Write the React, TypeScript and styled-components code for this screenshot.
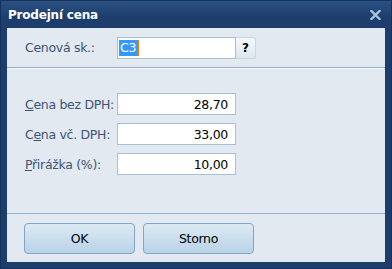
import React from "react";
import styled, { createGlobalStyle } from "styled-components";

const Global = createGlobalStyle`
  html, body { margin: 0; padding: 0; background: #1c3a66; }
  body { font-family: "DejaVu Sans", "Liberation Sans", sans-serif; }
`;

const Frame = styled.div`
  width: 392px;
  height: 269px;
  box-sizing: border-box;
  background: #1d3e6c;
  border: 1px solid #16325a;
  display: flex;
  flex-direction: column;
  padding: 0 6px 6px 6px;
`;

const TitleBar = styled.div`
  height: 27px;
  display: flex;
  align-items: center;
  justify-content: space-between;
  background: linear-gradient(#2a5283, #1d3e6c 60%);
  margin: 0 -6px;
  padding-left: 7px;
  padding-right: 10px;
`;

const Title = styled.span`
  color: #ffffff;
  font-weight: bold;
  font-size: 12px;
  font-family: "DejaVu Sans", sans-serif;
  letter-spacing: -0.2px;
`;

const Client = styled.div`
  flex: 1;
  background: #e2e9f1;
  display: flex;
  flex-direction: column;
`;

const TopSection = styled.div`
  height: 39px;
  display: flex;
  align-items: center;
  border-bottom: 1px solid #94b0cc;
`;

const Label = styled.label`
  width: 92px;
  padding-left: 18px;
  color: #3d5475;
  font-size: 12.5px;
  font-family: "DejaVu Sans", sans-serif;
  letter-spacing: -0.3px;
`;

const Key = styled.span`
  text-decoration: underline;
`;

const Input = styled.div<{ $align?: string }>`
  width: 119px;
  height: 22px;
  box-sizing: border-box;
  background: #ffffff;
  border: 1px solid #a9bfd6;
  display: flex;
  align-items: center;
  justify-content: ${(p) => (p.$align === "right" ? "flex-end" : "flex-start")};
  padding: 0 7px 0 1px;
  font-size: 12.5px;
  color: #000;
  letter-spacing: -0.3px;
`;

const Selected = styled.span`
  background: #3399ff;
  color: #fff;
  padding: 0 1px;
  line-height: 16px;
`;

const Caret = styled.span`
  width: 2px;
  height: 16px;
  background: #f07800;
`;

const HelpButton = styled.button`
  width: 20px;
  height: 22px;
  box-sizing: border-box;
  border: 1px solid #c6d6e4;
  border-left: none;
  border-radius: 0 3px 3px 0;
  background: linear-gradient(#f6f9fb, #dbe6ef);
  font-family: "DejaVu Sans", sans-serif;
  font-size: 12px;
  font-weight: bold;
  padding: 0;
  color: #000;
`;

const Fields = styled.div`
  flex: 1;
  display: flex;
  flex-direction: column;
  gap: 8px;
  padding-top: 24px;
  border-top: 1px solid #f4f7fa;
`;

const Row = styled.div`
  display: flex;
  align-items: center;
`;

const Footer = styled.div`
  height: 49px;
  border-top: 1px solid #94b0cc;
  display: flex;
  align-items: flex-start;
  gap: 8px;
  padding: 9px 0 0 17px;
  box-sizing: border-box;
`;

const Button = styled.button`
  width: 111px;
  height: 31px;
  border: 1px solid #7fa5c8;
  border-radius: 4px;
  background: linear-gradient(#dceaf4, #b8d3e6);
  font-family: "DejaVu Sans", sans-serif;
  font-size: 12.5px;
  color: #000;
  letter-spacing: -0.3px;
`;

const CloseIcon = () => (
  <svg width="11" height="10" viewBox="0 0 11 10">
    <path d="M1.5 1 L9.5 9 M9.5 1 L1.5 9" stroke="#a9c3df" strokeWidth="2.4" strokeLinecap="square" />
  </svg>
);

export default function App() {
  return (
    <>
      <Global />
      <Frame>
        <TitleBar>
          <Title>Prodejní cena</Title>
          <CloseIcon />
        </TitleBar>
        <Client>
          <TopSection>
            <Label>Cenová sk.:</Label>
            <Input>
              <Selected>C3</Selected>
              <Caret />
            </Input>
            <HelpButton>?</HelpButton>
          </TopSection>
          <Fields>
            <Row>
              <Label><Key>C</Key>ena bez DPH:</Label>
              <Input $align="right">28,70</Input>
            </Row>
            <Row>
              <Label>C<Key>e</Key>na vč. DPH:</Label>
              <Input $align="right">33,00</Input>
            </Row>
            <Row>
              <Label><Key>P</Key>řirážka (%):</Label>
              <Input $align="right">10,00</Input>
            </Row>
          </Fields>
          <Footer>
            <Button>OK</Button>
            <Button>Storno</Button>
          </Footer>
        </Client>
      </Frame>
    </>
  );
}
